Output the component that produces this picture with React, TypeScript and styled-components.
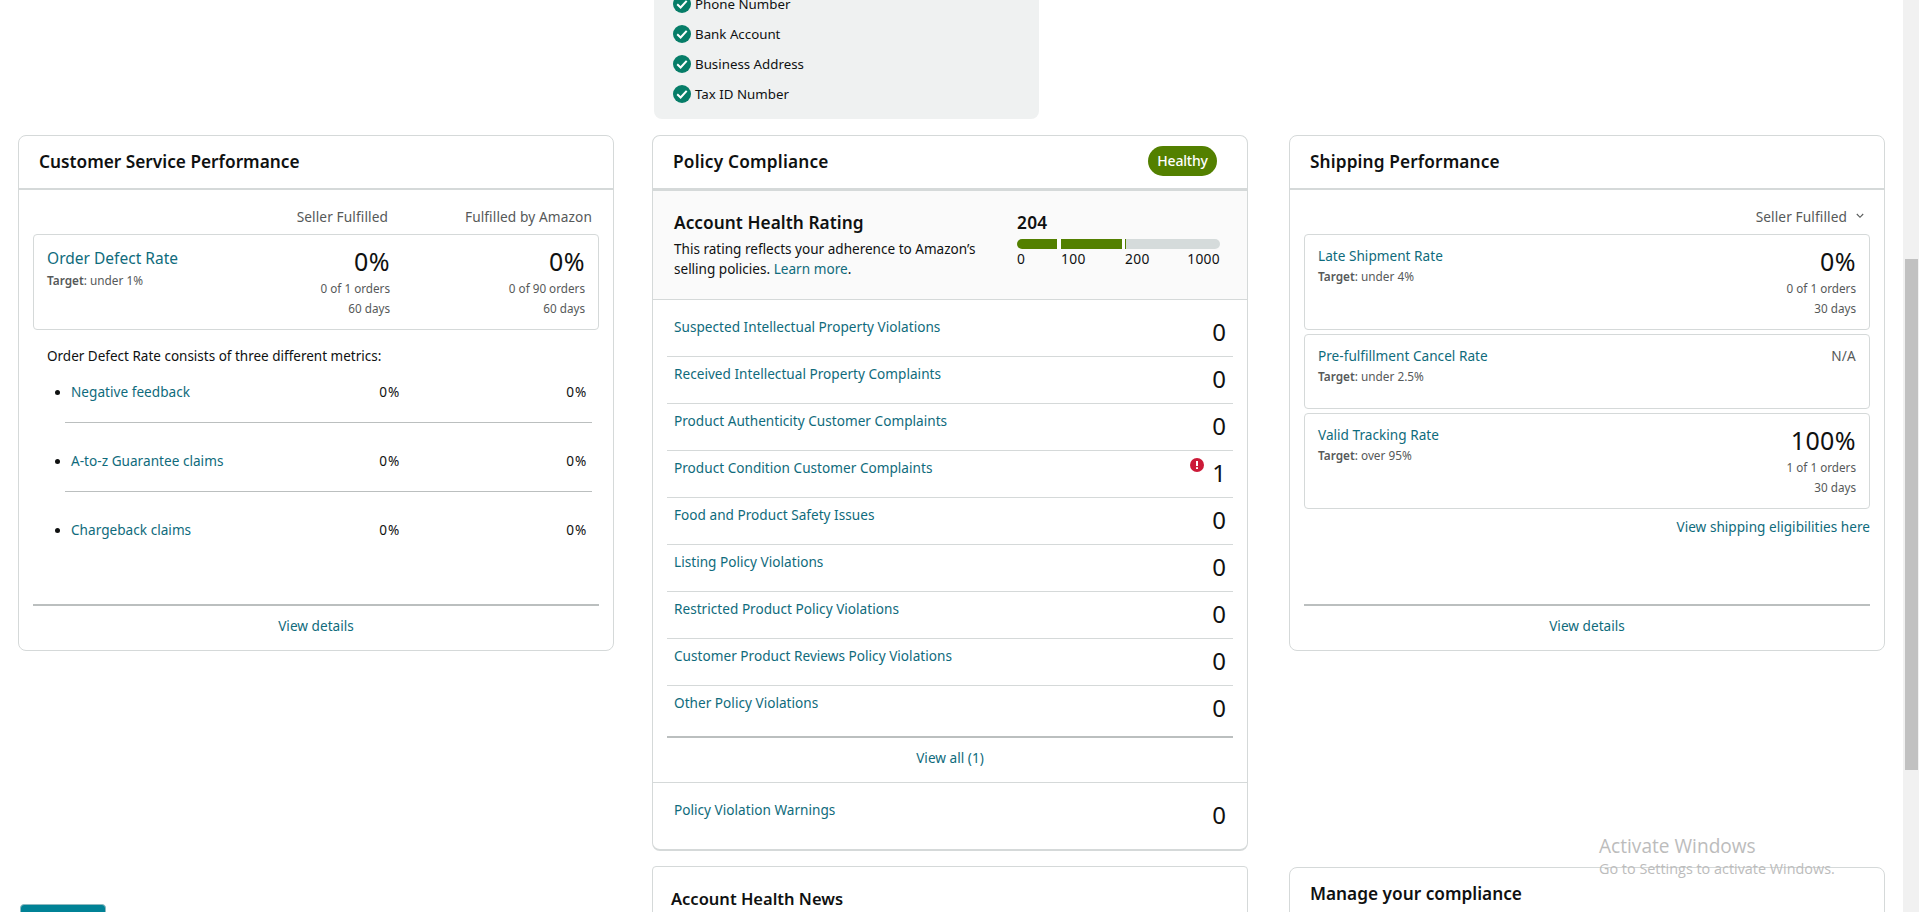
import React from "react";
import styled, { createGlobalStyle } from "styled-components";

const Global = createGlobalStyle`
  * { box-sizing: border-box; }
  html, body { margin: 0; background: #fff; overflow: hidden; }
  body { font-family: "Noto Sans", "Open Sans", sans-serif; font-size: 14px; line-height: 20px; color: #0f1111; }
`;

const Page = styled.div`
  display: flex; justify-content: space-between; width: 1919px; height: 912px; overflow: hidden;
`;
const Columns = styled.main`
  display: grid; grid-template-columns: 634px 637px 596px; padding-left: 18px; height: 912px;
`;
const Column = styled.div<{ $top?: number }>`
  display: flex; flex-direction: column; width: 596px; height: 912px; overflow: hidden; padding-top: ${(p) => p.$top ?? 0}px;
`;
const Card = styled.section<{ $h: number; $thick?: boolean; $radius?: number }>`
  display: flex; flex-direction: column; flex: none; height: ${(p) => p.$h}px;
  border: 1px solid #d5d9d9; border-bottom-width: ${(p) => (p.$thick ? 2 : 1)}px;
  border-radius: ${(p) => p.$radius ?? 8}px; background: #fff;
`;
const CardHeader = styled.header<{ $line?: number }>`
  display: flex; align-items: center; justify-content: space-between; flex: none;
  height: ${(p) => 52 + (p.$line ?? 2)}px; padding: 0 30px 0 20px;
  border-bottom: ${(p) => p.$line ?? 2}px solid #d5d9d9;
`;
const NewsHeader = styled.header`
  display: flex; padding: 20px 18px;
`;
const Title = styled.h2<{ $size?: number; $ls?: number }>`
  margin: 0; font-size: ${(p) => p.$size ?? 17.25}px; line-height: 24px; font-weight: 600;
  letter-spacing: ${(p) => p.$ls ?? 0}px;
`;
const Healthy = styled.span`
  display: flex; align-items: center; justify-content: center; width: 69px; height: 30px; margin-top: -3px;
  border-radius: 15px; background: #538000; color: #fff; font-weight: 500; letter-spacing: -0.2px;
`;
const Link = styled.a<{ $size?: number }>`
  color: #0f6b7c; text-decoration: none; font-size: ${(p) => p.$size ?? 13.6}px; letter-spacing: 0.02px;
`;

const Verified = styled.div`
  display: flex; flex-direction: column; gap: 10px; flex: none; width: 385px; height: 119px; margin: 0 0 16px 2px;
  padding-left: 19px; background: #eff1f1; border-radius: 0 0 8px 8px; overflow: hidden;
`;
const VerifiedRow = styled.div`
  display: flex; align-items: center; gap: 4px; height: 20px; flex: none; font-size: 13.3px;
  &:first-child { margin-top: -6px; }
  svg { flex: none; margin-top: -1px; }
`;

const Body = styled.div`
  display: flex; flex-direction: column; flex: 1; padding: 17px 14px 0;
`;
const Heads = styled.div`
  display: flex; justify-content: flex-end; align-items: center; height: 20px; margin-bottom: 7px;
  padding-right: 7px; color: #565959; font-size: 13.7px; letter-spacing: 0.1px;
  span + span { width: 204px; text-align: right; }
`;
const Metric = styled.div<{ $h: number }>`
  display: flex; flex: none; height: ${(p) => p.$h}px; margin-bottom: 4px; padding: 12px 13px;
  border: 1px solid #d5d9d9; border-radius: 4px;
`;
const MetricName = styled.div<{ $large?: boolean }>`
  display: flex; flex-direction: column; flex: 1; gap: ${(p) => (p.$large ? 2 : 0)}px;
  margin-top: ${(p) => (p.$large ? 1 : -1)}px;
`;
const Target = styled.div`
  color: #565959; font-size: 11.8px; line-height: 20px;
  b { font-weight: 600; }
`;
const Values = styled.div<{ $w?: number }>`
  display: flex; flex-direction: column; width: ${(p) => p.$w ?? 180}px; text-align: right;
  color: #565959; font-size: 11.7px; line-height: 20px;
`;
const Big = styled.div`
  margin-bottom: 3px; color: #0f1111; font-size: 25px; line-height: 28px; letter-spacing: 0.4px;
`;
const NA = styled.div`
  margin-top: -1px; font-size: 13.6px; letter-spacing: 0.2px;
`;
const Note = styled.p`
  margin: 12px 0 0 14px; font-size: 13.5px; line-height: 20px;
`;
const ClaimList = styled.ul`
  display: flex; flex-direction: column; margin: 0 7px 0 32px; padding: 16px 0 0; list-style: none;
`;
const Claim = styled.li<{ $last?: boolean }>`
  display: grid; grid-template-columns: auto 1fr 60px 187px; align-items: start; height: 69px;
  padding: 28px 5px 0 0; font-size: 13.6px;
  border-bottom: 1px solid ${(p) => (p.$last ? "transparent" : "#bbbfbf")};
  &:first-child { height: 41px; padding-top: 0; }
  span { text-align: right; letter-spacing: 0.8px; }
`;
const Dot = styled.i`
  width: 5px; height: 5px; margin: 8px 11px 0 -10px; border-radius: 50%; background: #0f1111;
`;
const CardFooter = styled.footer`
  display: flex; justify-content: center; flex: none; height: 46px; margin: auto 14px 0;
  padding-top: 10px; border-top: 2px solid #bbbfbf;
`;

const Rating = styled.div`
  display: flex; justify-content: space-between; flex: none; height: 109px; padding: 20px 27px 0 21px;
  background: #fafafa; border-bottom: 1px solid #d5d9d9;
  p { margin: 4px 0 0; font-size: 13.55px; }
`;
const Score = styled.div`
  display: flex; flex-direction: column; width: 203px;
`;
const Bar = styled.div`
  display: flex; height: 10px; margin-top: 4px; border-radius: 5px; overflow: hidden;
`;
const Seg = styled.i<{ $w: number; $c: string }>`
  flex: none; width: ${(p) => p.$w}px; background: ${(p) => p.$c};
`;
const Scale = styled.div`
  display: grid; grid-template-columns: 44px 64px 1fr auto; line-height: 19px; font-size: 13.8px; letter-spacing: 0.3px;
`;
const Violations = styled.div`
  display: flex; flex-direction: column; flex: none; padding: 10px 14px 0;
`;
const Violation = styled.div<{ $last?: boolean }>`
  display: flex; justify-content: space-between; flex: none; height: ${(p) => (p.$last ? 52 : 47)}px;
  padding: 7px 7px 0;
  border-bottom: ${(p) => (p.$last ? "2px solid #bbbfbf" : "1px solid #d5d9d9")};
`;
const Count = styled.div`
  display: flex; gap: 8px; font-size: 24px; line-height: 30px;
`;
const ViewAll = styled.div`
  display: flex; justify-content: center; flex: none; height: 45px; padding-top: 10px; border-bottom: 1px solid #d5d9d9;
`;
const Warnings = styled.div`
  display: flex; justify-content: space-between; padding: 17px 21px 0;
`;
const Eligible = styled.div`
  display: flex; justify-content: flex-end; padding-top: 4px;
`;
const Spacer = styled.div<{ $h: number }>`
  flex: none; height: ${(p) => p.$h}px;
`;
const Button = styled.button`
  flex: none; width: 86px; height: 32px; margin-left: 2px; border: 1px solid #8fb9c0; border-radius: 4px; background: #008296;
`;
const Scrollbar = styled.aside`
  width: 16px; height: 912px; padding: 259px 1px 0 2px; background: #f1f1f1;
`;
const Thumb = styled.div`
  height: 511px; background: #c1c1c1;
`;
const Watermark = styled.div`
  position: absolute; left: 1599px; top: 833px; color: #bcbcbc; font-family: "Open Sans", sans-serif;
  font-size: 19.1px; line-height: 26px; white-space: nowrap;
  small { display: block; font-size: 14.4px; line-height: 20px; }
`;

const Check = () => (
  <svg width="18" height="18" viewBox="0 0 18 18">
    <circle cx="9" cy="9" r="9" fill="#067d68" />
    <path d="M4.2 9.3 7.6 12.5 13.7 5.8" fill="none" stroke="#fff" strokeWidth="2" />
  </svg>
);
const Alert = () => (
  <svg width="14" height="14" viewBox="0 0 14 14">
    <circle cx="7" cy="7" r="7" fill="#cc1a38" />
    <path d="M7 3v5M7 9.2v1.8" stroke="#fff" strokeWidth="2" />
  </svg>
);
const Chevron = () => (
  <svg width="8" height="6" viewBox="0 0 8 6">
    <path d="M0.8 1 4 4.3 7.2 1" fill="none" stroke="#565959" strokeWidth="1.1" />
  </svg>
);
const Filter = styled.div`
  display: flex; align-items: center; gap: 9px; margin-right: -1px;
  svg { margin-top: -3px; }
`;

const violations: [string, number][] = [
  ["Suspected Intellectual Property Violations", 0],
  ["Received Intellectual Property Complaints", 0],
  ["Product Authenticity Customer Complaints", 0],
  ["Product Condition Customer Complaints", 1],
  ["Food and Product Safety Issues", 0],
  ["Listing Policy Violations", 0],
  ["Restricted Product Policy Violations", 0],
  ["Customer Product Reviews Policy Violations", 0],
  ["Other Policy Violations", 0],
];

export default function App() {
  return (
    <>
      <Global />
      <Page>
        <Columns>
          <Column $top={135}>
            <Card $h={516}>
              <CardHeader><Title>Customer Service Performance</Title></CardHeader>
              <Body>
                <Heads><span>Seller Fulfilled</span><span>Fulfilled by Amazon</span></Heads>
                <Metric $h={96}>
                  <MetricName $large>
                    <Link $size={15.5}>Order Defect Rate</Link>
                    <Target><b>Target</b>: under 1%</Target>
                  </MetricName>
                  <Values><Big>0%</Big>0 of 1 orders<br />60 days</Values>
                  <Values $w={195}><Big>0%</Big>0 of 90 orders<br />60 days</Values>
                </Metric>
                <Note>Order Defect Rate consists of three different metrics:</Note>
                <ClaimList>
                  {["Negative feedback", "A-to-z Guarantee claims", "Chargeback claims"].map((c, i) => (
                    <Claim key={c} $last={i === 2}><Dot /><Link>{c}</Link><span>0%</span><span>0%</span></Claim>
                  ))}
                </ClaimList>
              </Body>
              <CardFooter><Link>View details</Link></CardFooter>
            </Card>
            <Spacer $h={253} />
            <Button />
          </Column>
          <Column>
            <Verified>
              {["Phone Number", "Bank Account", "Business Address", "Tax ID Number"].map((v) => (
                <VerifiedRow key={v}><Check />{v}</VerifiedRow>
              ))}
            </Verified>
            <Card $h={716} $thick>
              <CardHeader $line={3}><Title $ls={0.2}>Policy Compliance</Title><Healthy>Healthy</Healthy></CardHeader>
              <Rating>
                <div>
                  <Title $ls={0.05}>Account Health Rating</Title>
                  <p>This rating reflects your adherence to Amazon’s<br />selling policies. <Link>Learn more</Link>.</p>
                </div>
                <Score>
                  <Title $ls={0.3}>204</Title>
                  <Bar>
                    <Seg $w={40} $c="#538000" /><Seg $w={4} $c="#fff" /><Seg $w={61} $c="#538000" />
                    <Seg $w={3} $c="#fff" /><Seg $w={1} $c="#538000" /><Seg $w={94} $c="#d5dbdb" />
                  </Bar>
                  <Scale><span>0</span><span>100</span><span>200</span><span>1000</span></Scale>
                </Score>
              </Rating>
              <Violations>
                {violations.map(([name, n], i) => (
                  <Violation key={name} $last={i === violations.length - 1}>
                    <Link>{name}</Link><Count>{n > 0 && <Alert />}{n}</Count>
                  </Violation>
                ))}
              </Violations>
              <ViewAll><Link>View all (1)</Link></ViewAll>
              <Warnings><Link>Policy Violation Warnings</Link><Count>0</Count></Warnings>
            </Card>
            <Spacer $h={15} />
            <Card $h={100} $radius={4}>
              <NewsHeader><Title $size={16.5}>Account Health News</Title></NewsHeader>
            </Card>
          </Column>
          <Column $top={135}>
            <Card $h={516}>
              <CardHeader><Title $ls={0.12}>Shipping Performance</Title></CardHeader>
              <Body>
                <Heads><Filter>Seller Fulfilled<Chevron /></Filter></Heads>
                <Metric $h={96}>
                  <MetricName><Link>Late Shipment Rate</Link><Target><b>Target</b>: under 4%</Target></MetricName>
                  <Values><Big>0%</Big>0 of 1 orders<br />30 days</Values>
                </Metric>
                <Metric $h={75}>
                  <MetricName><Link>Pre-fulfillment Cancel Rate</Link><Target><b>Target</b>: under 2.5%</Target></MetricName>
                  <Values><NA>N/A</NA></Values>
                </Metric>
                <Metric $h={96}>
                  <MetricName><Link>Valid Tracking Rate</Link><Target><b>Target</b>: over 95%</Target></MetricName>
                  <Values><Big>100%</Big>1 of 1 orders<br />30 days</Values>
                </Metric>
                <Eligible><Link>View shipping eligibilities here</Link></Eligible>
              </Body>
              <CardFooter><Link>View details</Link></CardFooter>
            </Card>
            <Spacer $h={216} />
            <Card $h={100}>
              <CardHeader><Title>Manage your compliance</Title></CardHeader>
            </Card>
          </Column>
        </Columns>
        <Scrollbar><Thumb /></Scrollbar>
      </Page>
      <Watermark>Activate Windows<small>Go to Settings to activate Windows.</small></Watermark>
    </>
  );
}
